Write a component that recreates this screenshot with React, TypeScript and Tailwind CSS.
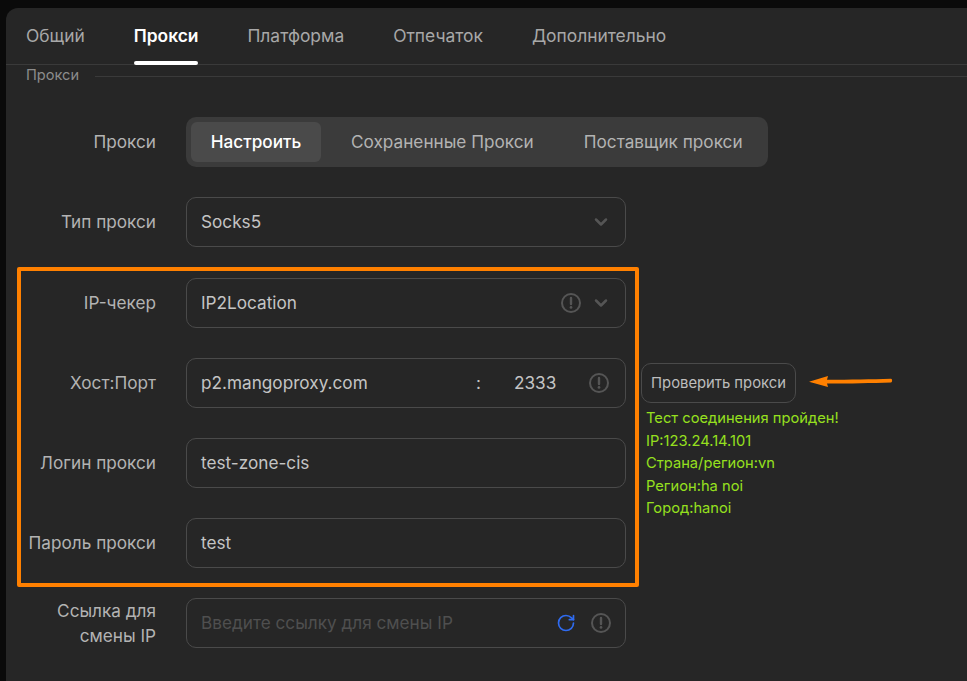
import { ChevronDown, RotateCw } from "lucide-react";

const tabs = ["Общий", "Прокси", "Платформа", "Отпечаток", "Дополнительно"];
const sources = ["Настроить", "Сохраненные Прокси", "Поставщик прокси"];
const checkResult = [
  "Тест соединения пройден!",
  "IP:123.24.14.101",
  "Страна/регион:vn",
  "Регион:ha noi",
  "Город:hanoi",
];

const Info = () => (
  <svg width="20" height="20" viewBox="0 0 20 20" fill="none" className="shrink-0 text-[#555555]">
    <circle cx="10" cy="10" r="9" stroke="currentColor" strokeWidth="2" />
    <path d="M10 5v6" stroke="currentColor" strokeWidth="2.4" strokeLinecap="round" />
    <circle cx="10" cy="14.4" r="1.4" fill="currentColor" />
  </svg>
);

const Chevron = () => <ChevronDown size={20} strokeWidth={3} className="shrink-0 text-[#555555]" />;

const Row = ({ label, children }: { label: React.ReactNode; children: React.ReactNode }) => (
  <div className="flex items-center">
    <div className="w-[150px] shrink-0 text-right text-[17.2px] leading-[26px] text-[#b3b3b3]">{label}</div>
    <div className="ml-[30px] min-w-0">{children}</div>
  </div>
);

const Field = ({ children }: { children: React.ReactNode }) => (
  <div className="flex h-[50px] w-[440px] items-center rounded-[10px] border border-[#4a4a4a] pl-[14px] pr-[14px] text-[17.2px] text-[#c4c4c4]">
    {children}
  </div>
);

export default function App() {
  return (
    <div className="h-[681px] w-[967px] overflow-hidden bg-[#0a0a0a] pl-[6px] pt-[8px] font-['Inter',sans-serif]">
      <div className="relative h-[673px] rounded-tl-[12px] bg-[#262626]">
        <div className="flex h-[57px] gap-[49px] border-b border-[#3a3a3a] pl-[20px] pt-[16px] text-[17.4px] leading-[24px]">
          {tabs.map((tab) => (
            <div
              key={tab}
              className={
                tab === "Прокси"
                  ? "relative h-[40px] font-semibold text-white"
                  : "h-[40px] text-[#a8a8a8]"
              }
            >
              {tab}
              {tab === "Прокси" && (
                <div className="absolute bottom-[-1px] left-0 right-0 h-[4px] rounded-full bg-white" />
              )}
            </div>
          ))}
        </div>

        <div className="mt-px flex h-[20px] items-center pl-[20px] text-[14.6px] text-[#8c8c8c]">
          <span>Прокси</span>
          <div className="ml-[16px] h-px flex-1 bg-[#3a3a3a]" />
        </div>

        <div className="mt-[31px] flex flex-col gap-[30px]">
          <Row label="Прокси">
            <div className="flex h-[50px] w-[582px] items-center whitespace-nowrap rounded-[10px] bg-[#3b3b3b] p-[5px] text-[17.2px]">
              {sources.map((source, i) => (
                <div
                  key={source}
                  className={
                    i === 0
                      ? "flex h-[40px] w-[130px] items-center justify-center rounded-[6px] bg-[#4a4a4a] font-medium text-white"
                      : "flex h-[40px] items-center px-[30px] pr-[20px] text-[#b3b3b3]"
                  }
                >
                  {source}
                </div>
              ))}
            </div>
          </Row>

          <Row label="Тип прокси">
            <Field>
              <span className="flex-1">Socks5</span>
              <Chevron />
            </Field>
          </Row>

          <div className="mt-px">
            <Row label="IP-чекер">
              <Field>
                <span className="flex-1">IP2Location</span>
                <Info />
                <span className="ml-[10px]">
                  <Chevron />
                </span>
              </Field>
            </Row>
          </div>

          <Row label="Хост:Порт">
            <div className="flex items-center">
              <Field>
                <span className="w-[275px]">p2.mangoproxy.com</span>
                <span className="w-[38px]">:</span>
                <span className="flex-1">2333</span>
                <span className="mr-[2px]">
                  <Info />
                </span>
              </Field>
            </div>
          </Row>

          <Row label="Логин прокси">
            <Field>test-zone-cis</Field>
          </Row>

          <Row label="Пароль прокси">
            <Field>test</Field>
          </Row>

          <Row
            label={
              <div className="leading-[25px]">
                Ссылка для
                <br />
                смены IP
              </div>
            }
          >
            <Field>
              <span className="flex-1 text-[#4f4f4f]">Введите ссылку для смены IP</span>
              <RotateCw size={20} strokeWidth={2} className="text-[#2f6bf0]" />
              <span className="ml-[15px]">
                <Info />
              </span>
            </Field>
          </Row>
        </div>

        {/* check button and its result sit beside the host row */}
        <div className="absolute left-[635px] top-[355px]">
          <div className="flex h-[40px] w-[155px] items-center justify-center rounded-[10px] border border-[#4a4a4a] text-[14.8px] text-[#bdbdbd]">
            Проверить прокси
          </div>
          <div className="ml-[5px] mt-[4px] text-[14.7px] leading-[22.5px] text-[#96e01e]">
            {checkResult.map((line) => (
              <div key={line}>{line}</div>
            ))}
          </div>
        </div>

        {/* annotation drawn on top of the screenshot */}
        <div className="absolute left-[11px] top-[259px] h-[320px] w-[622px] rounded-[2px] border-[4px] border-[#ff8000]" />
        <svg className="absolute left-[800px] top-[362px]" width="90" height="20" viewBox="0 0 90 20" fill="none">
          <path d="M3 11.7 L22 6 L21 9.8 C45 9.8 65 9.4 85 8.8 C86.5 8.8 86.5 12.4 85 12.4 C65 13 45 13.4 21 13.6 L22 17 Z" fill="#ff8000" />
        </svg>
      </div>
    </div>
  );
}
